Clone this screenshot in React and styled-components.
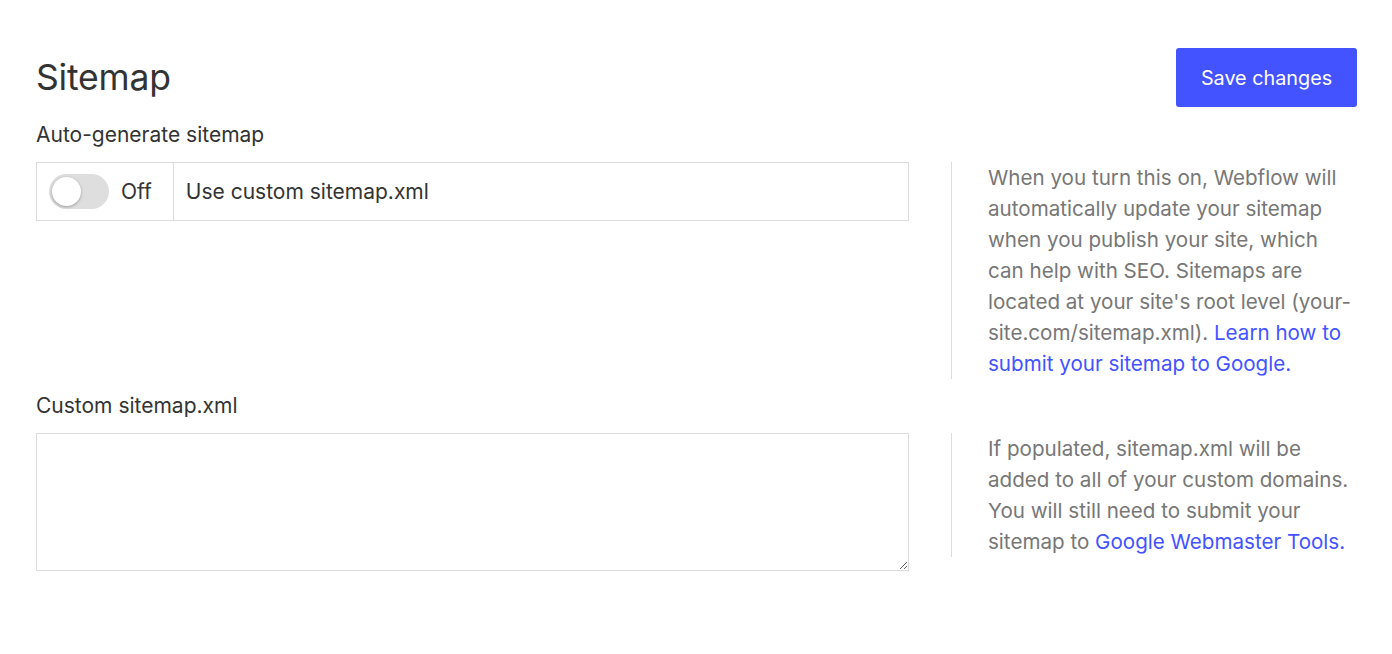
import { useState } from 'react'
import styled, { createGlobalStyle } from 'styled-components'

const GlobalStyle = createGlobalStyle`
  body {
    margin: 0;
    background: #fff;
    font-family: Inter, "Noto Sans", sans-serif;
    color: #333;
  }
`

const Page = styled.main`
  padding: 48px 35px 40px 36px;
`

const Header = styled.header`
  display: flex;
  align-items: center;
  justify-content: space-between;
  height: 59px;
`

const Title = styled.h1`
  margin: 0;
  font-size: 35.5px;
  font-weight: 400;
  color: #333;
  letter-spacing: -0.2px;
`

const SaveButton = styled.button`
  width: 181px;
  height: 59px;
  border: 0;
  border-radius: 3px;
  background: #4353ff;
  color: #fff;
  font-family: Inter, sans-serif;
  font-size: 19.8px;
  cursor: pointer;
`

const Section = styled.section`
  margin-top: ${({ $top }) => $top}px;
`

const Label = styled.div`
  font-size: 21px;
  line-height: 26px;
  color: #333;
  margin-bottom: 14px;
`

const Row = styled.div`
  display: grid;
  grid-template-columns: 873px 1fr;
  column-gap: 42px;
  align-items: start;
`

const ToggleBox = styled.div`
  display: flex;
  height: 57px;
  border: 1px solid #dcdcdc;
`

const ToggleCell = styled.label`
  display: flex;
  align-items: center;
  gap: 12px;
  padding: 0 21px 0 12px;
  border-right: 1px solid #dcdcdc;
  font-size: 21px;
  color: #333;
  cursor: pointer;
`

const Track = styled.span`
  position: relative;
  width: 60px;
  height: 35px;
  border-radius: 18px;
  background: ${({ $on }) => ($on ? '#4353ff' : '#dedede')};
`

const Knob = styled.span`
  position: absolute;
  top: 3px;
  left: ${({ $on }) => ($on ? '28px' : '3px')};
  width: 29px;
  height: 29px;
  border-radius: 50%;
  background: #fff;
  box-shadow: 0 1px 3px rgba(0, 0, 0, 0.3);
`

const OptionText = styled.div`
  display: flex;
  align-items: center;
  padding-left: 12px;
  font-size: 21px;
  color: #333;
`

const TextArea = styled.textarea`
  display: block;
  box-sizing: border-box;
  width: 873px;
  height: 138px;
  border: 1px solid #dcdcdc;
  border-radius: 0;
  padding: 10px 12px;
  font-family: Inter, sans-serif;
  font-size: 16px;
  outline: none;
`

const Help = styled.p`
  margin: 0;
  padding: 0 0 0 36px;
  border-left: 1px solid #dcdcdc;
  font-size: 20.6px;
  line-height: 31px;
  color: #777;
`

const HelpLink = styled.a`
  color: #4353ff;
  text-decoration: none;
`

export default function App() {
  const [on, setOn] = useState(false)

  return (
    <>
      <GlobalStyle />
      <Page>
        <Header>
          <Title>Sitemap</Title>
          <SaveButton>Save changes</SaveButton>
        </Header>

        <Section $top={15}>
          <Label>Auto-generate sitemap</Label>
          <Row>
            <ToggleBox>
              <ToggleCell onClick={() => setOn(!on)}>
                <Track $on={on}>
                  <Knob $on={on} />
                </Track>
                {on ? 'On' : 'Off'}
              </ToggleCell>
              <OptionText>Use custom sitemap.xml</OptionText>
            </ToggleBox>
            <Help>
              When you turn this on, Webflow will automatically update your sitemap when you publish your
              site, which can help with SEO. Sitemaps are located at your site's root level
              (your-site.com/sitemap.xml). <HelpLink href="#">Learn how to submit your sitemap to Google.</HelpLink>
            </Help>
          </Row>
        </Section>

        <Section $top={14}>
          <Label>Custom sitemap.xml</Label>
          <Row>
            <TextArea />
            <Help>
              If populated, sitemap.xml will be added to all of your custom domains. You will still need to
              submit your sitemap to <HelpLink href="#">Google Webmaster Tools.</HelpLink>
            </Help>
          </Row>
        </Section>
      </Page>
    </>
  )
}
